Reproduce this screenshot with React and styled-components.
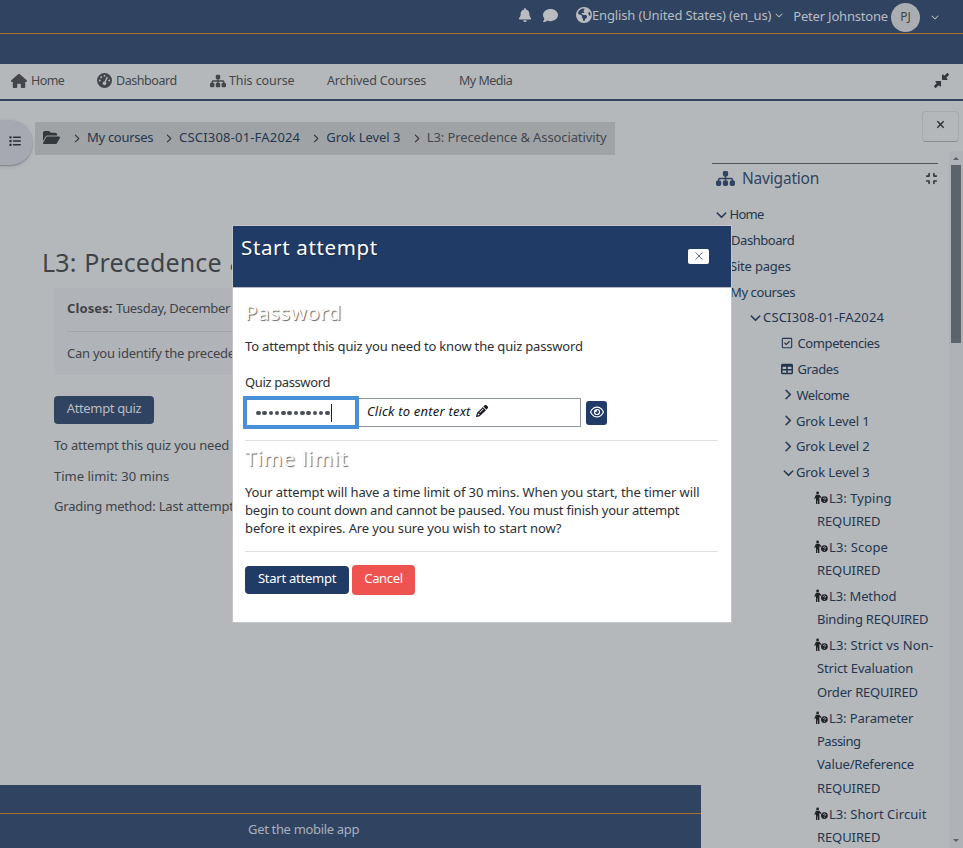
import React from "react";
import styled, { createGlobalStyle } from "styled-components";
import {
  FaBell, FaComment, FaEarthAmericas, FaChevronDown, FaChevronRight, FaHouse, FaGaugeHigh,
  FaSitemap, FaFolderOpen, FaCompress, FaRegSquareCheck, FaTable, FaPencil, FaRegEye,
  FaList, FaDownLeftAndUpRightToCenter,
} from "react-icons/fa6";

const Global = createGlobalStyle`
  * { box-sizing: border-box; }
  body { margin: 0; }
  button { font: inherit; letter-spacing: inherit; padding: 0; border: 0; }
  h1, h2, h3, p, ul { margin: 0; padding: 0; font-weight: 400; }
  svg { display: block; flex: none; }
`;

const Page = styled.div`
  position: relative;
  width: 963px;
  height: 848px;
  overflow: hidden;
  display: flex;
  flex-direction: column;
  background: #b4b8bb;
  color: #3f4347;
  font: 13px/18px "Noto Sans", "DejaVu Sans", sans-serif;
  white-space: nowrap;
`;
const Txt = styled.span`
  letter-spacing: ${(p) => p.$ls || 0}px;
`;

const TopBar = styled.header`
  height: 34px;
  flex: none;
  display: flex;
  align-items: center;
  padding-left: 518px;
  background: #304361;
  border-bottom: 1px solid #a9732f;
  color: #b9bdc1;
`;
const TopItem = styled.div`
  display: flex;
  align-items: center;
  margin-left: ${(p) => p.$gap || 0}px;
  height: 33px;
  padding-bottom: ${(p) => (p.$low ? 1 : 3)}px;
`;
const Avatar = styled.div`
  width: 29px;
  height: 29px;
  margin: 1px 11px 0 3px;
  border-radius: 50%;
  background: #aaadb1;
  color: #3f454c;
  font-size: 12px;
  line-height: 27px;
  text-align: center;
`;
const Band = styled.div`
  height: 30px;
  flex: none;
  background: #304361;
`;
const NavBar = styled.nav`
  height: 37px;
  flex: none;
  display: flex;
  align-items: center;
  padding: 0 14px 2px 11px;
  border-bottom: 2px solid #304361;
  color: #43474b;
  font-size: 12.5px;
`;
const NavItem = styled.a`
  display: flex;
  align-items: center;
  gap: ${(p) => p.$gap || 0}px;
  width: ${(p) => p.$w}px;
  span {
    padding-top: 1px;
  }
`;
const Shrink = styled.div`
  margin-left: auto;
  color: #35393f;
`;

const Body = styled.div`
  flex: 1;
  min-height: 0;
  display: flex;
`;
const Main = styled.main`
  width: 701px;
  display: flex;
  flex-direction: column;
`;
const CrumbRow = styled.div`
  display: flex;
  height: 65px;
  padding-top: 19px;
`;
const IndexToggle = styled.button`
  width: 33px;
  height: 46px;
  margin-right: 2px;
  padding: 0 0 3px 9px;
  border-radius: 0 23px 23px 0;
  background: #a6a9b1;
  border-bottom: 1px solid #85888c;
  box-shadow: 0 1px 3px rgba(0, 0, 0, 0.12);
  color: #2c3136;
`;
const Crumbs = styled.div`
  display: flex;
  align-items: center;
  width: 580px;
  height: 33px;
  margin-top: 2px;
  padding: 0 0 3px 8px;
  background: #a0a3a6;
  color: #24364f;
`;
const Sep = styled.span`
  display: flex;
  margin: 2px 6px 0 ${(p) => p.$l}px;
  color: #33383d;
`;
const Muted = styled.span`
  color: #43484f;
`;
const Title = styled.h1`
  margin: 79px 0 0 42px;
  font-size: 25px;
  line-height: 34px;
  letter-spacing: 0.12px;
  word-spacing: 1.2px;
`;
const Quiz = styled.section`
  padding: 9px 0 0 54px;
`;
const InfoBox = styled.div`
  width: 593px;
  height: 87px;
  padding: 11px 13px 0;
  background: #b0b3b8;
`;
const InfoLine = styled.div`
  height: ${(p) => p.$h}px;
  border-bottom: ${(p) => (p.$rule ? "1px solid #a1a4a8" : "0")};
`;
const Button = styled.button`
  display: inline-block;
  width: ${(p) => p.$w}px;
  height: ${(p) => p.$h || 28}px;
  border-radius: 4px;
  padding-bottom: 4px;
  background: ${(p) => p.$bg};
  color: ${(p) => p.$fg || "#fff"};
`;
const AttemptWrap = styled.div`
  display: flex;
  margin: 21px 0 12px;
  height: 28px;
`;
const Detail = styled.p`
  height: 30.5px;
`;
const Footer = styled.footer`
  margin-top: auto;
  height: 63px;
  padding-top: 28px;
  background: #304361;
`;
const FooterLine = styled.div`
  border-top: 1px solid #a9732f;
  padding: 6px 0 0 248px;
  height: 35px;
  color: #a9b1bd;
`;

const Drawer = styled.aside`
  width: 262px;
  display: flex;
  flex-direction: column;
`;
const CloseDrawer = styled.button`
  width: 37px;
  height: 31px;
  margin: 10px 4px 0 auto;
  display: flex;
  align-items: center;
  justify-content: center;
  padding-bottom: 4px;
  background: transparent;
  border: 1px solid #a5a8ac;
  border-bottom-color: #8a8d90;
  border-radius: 4px;
  color: #2a2e33;
`;
const DrawerBody = styled.div`
  flex: 1;
  margin-top: 9px;
  min-height: 0;
  display: flex;
`;
const Block = styled.div`
  width: 248px;
  padding: 12px 11px 0;
`;
const BlockHead = styled.div`
  display: flex;
  align-items: center;
  height: 30px;
  border-top: 1px solid #4e545c;
  padding: 0 0 1px 4px;
  color: #304361;
`;
const BlockName = styled.h2`
  font-size: 15.5px;
  margin-left: 7px;
  letter-spacing: -0.2px;
`;
const Tree = styled.div`
  padding-top: 8.4px;
  color: #24364f;
`;
const TreeRow = styled.div`
  display: flex;
  align-items: center;
  height: 25.8px;
  padding-left: ${(p) => p.$x}px;
`;
const TreeIcon = styled.span`
  width: ${(p) => p.$w}px;
  svg {
    stroke: currentColor;
    stroke-width: ${(p) => (p.$bold ? 12 : 0)}px;
  }
`;
const Activity = styled.div`
  padding: 1.4px 0 1px 105px;
  line-height: 23.4px;
`;
const ActLine = styled.div`
  display: flex;
  align-items: center;
  height: 23.4px;
  margin-left: ${(p) => (p.$first ? -3 : 0)}px;
`;
const ActIcon = styled.span`
  width: 15px;
  padding-bottom: 1px;
  color: #1f2327;
`;
const Scroll = styled.div`
  width: 14px;
  height: 697px;
  display: flex;
  flex-direction: column;
  align-items: center;
  background: #afb2b7;
`;
const Thumb = styled.div`
  width: 10px;
  height: 178px;
  margin: 5px 0 auto;
  background: #5d636a;
`;
const Arrow = styled.i`
  margin: ${(p) => (p.$down ? "0 0 6px" : "6px 0 0")};
  border: 3px solid transparent;
  ${(p) => (p.$down ? "border-bottom: 0; border-top" : "border-top: 0; border-bottom")}: 3px solid #5c6167;
`;

const Dialog = styled.div`
  position: absolute;
  left: 232px;
  top: 225px;
  width: 500px;
  height: 398px;
  background: #fff;
  border: 1px solid #c3c6c8;
  color: #2c3035;
`;
const DialogHead = styled.div`
  display: flex;
  justify-content: space-between;
  height: 62px;
  padding: 7px 22px 0 8px;
  background: #213b67;
  border-bottom: 1px solid #b6bac4;
`;
const DialogTitle = styled.h2`
  font-size: 20.5px;
  line-height: 28px;
  color: #fff;
  text-shadow: 1px 1px 1px rgba(0, 0, 0, 0.3);
  letter-spacing: 0.65px;
`;
const DialogClose = styled.button`
  display: flex;
  align-items: center;
  justify-content: center;
  width: 21px;
  height: 15px;
  margin-top: 16px;
  padding-bottom: 2px;
  border-radius: 2px;
  background: #fff;
  color: #65717e;
`;
const Form = styled.div`
  padding: 10px 13px 0 12px;
`;
const Legend = styled.h3`
  height: 28px;
  margin-top: ${(p) => p.$mt || 0}px;
  font-size: 20.5px;
  line-height: 28px;
  color: #fff;
  text-shadow: 1px 1px 1px rgba(0, 0, 0, 0.6);
  letter-spacing: ${(p) => p.$ls}px;
`;
const Copy = styled.p`
  margin-top: ${(p) => p.$mt}px;
`;
const Field = styled.div`
  display: flex;
  height: 50px;
  padding-top: 7px;
  border-bottom: 1px solid #dedfe3;
`;
const Masked = styled.div`
  display: flex;
  align-items: center;
  width: 112px;
  height: 29px;
  padding-left: 11px;
  background: #fff;
  outline: 4px solid #4a90d9;
  outline-offset: -2px;
  z-index: 1;
`;
const Dot = styled.i`
  width: 4.5px;
  height: 4.5px;
  margin: 1px 1.8px 0 0;
  border-radius: 50%;
  background: #4a4f57;
`;
const Caret = styled.i`
  width: 1px;
  height: 18px;
  margin-left: -1px;
  background: #222;
`;
const Hint = styled.div`
  display: flex;
  width: 224px;
  height: 29px;
  padding: 3px 0 0 9px;
  border: 1px solid #8f959e;
  font-style: italic;
  color: #0f1720;
`;
const Pencil = styled.span`
  margin: 3px 0 0 5px;
`;
const Reveal = styled.button`
  display: flex;
  align-items: center;
  justify-content: center;
  width: 21px;
  height: 24px;
  margin: 3px 0 0 5px;
  padding-bottom: 3px;
  border-radius: 3px;
  background: #213b67;
  color: #fff;
`;
const Rule = styled.div`
  margin-top: 14px;
  border-top: 1px solid #dedfe3;
`;
const Actions = styled.div`
  display: flex;
  align-items: center;
  gap: 3px;
  margin-top: 13px;
`;

const Cross = ({ size, weight }) => (
  <svg width={size} height={size} viewBox="0 0 10 10" fill="none" stroke="currentColor" strokeWidth={weight}>
    <path d="M1.5 1.5 8.5 8.5M8.5 1.5 1.5 8.5" />
  </svg>
);

const PersonQuestion = () => (
  <svg width="14" height="14" viewBox="0 0 14 14" fill="currentColor">
    <circle cx="3.6" cy="1.9" r="1.4" />
    <path d="M2 3.7h3.2L7.4 6l-.9 1-1.1-.9V13H4V9.4h-.6V13H2V6.5L1.2 8l-1-.6z" />
    <circle cx="10.4" cy="8.6" r="3.4" />
    <path d="M9.2 7.8c.1-1.4 2.4-1.3 2.4 0 0 .8-1.2.8-1.2 1.4M10.4 9.9v.9" fill="none" stroke="#b4b8bb" strokeWidth=".9" />
  </svg>
);

const down = <FaChevronDown size={11} />;
const right = <FaChevronRight size={11} />;
const tree = [
  [4, 13.5, down, "Home", -0.7],
  [4, 15, null, "Dashboard", -0.45],
  [4, 14, null, "Site pages", -0.2],
  [4, 14, null, "My courses", -0.4],
  [38, 13, down, "CSCI308-01-FA2024", 0.18],
  [69, 16.5, <FaRegSquareCheck size={12} />, "Competencies", -0.4],
  [69, 16.5, <FaTable size={12} />, "Grades", -0.4],
  [70, 14.5, right, "Welcome", -0.5],
  [70, 14, right, "Grok Level 1", -0.1],
  [70, 14, right, "Grok Level 2", -0.1],
  [71, 13, down, "Grok Level 3", -0.1],
];
const activities = [
  [["L3: Typing", 0.05], ["REQUIRED", -0.1]],
  [["L3: Scope", 0.15], ["REQUIRED", -0.1]],
  [["L3: Method", -0.15], ["Binding REQUIRED", -0.22]],
  [["L3: Strict vs Non-", 0.12], ["Strict Evaluation", -0.15], ["Order REQUIRED", -0.2]],
  [["L3: Parameter", -0.1], ["Passing", -0.5], ["Value/Reference", -0.18], ["REQUIRED", -0.1]],
  [["L3: Short Circuit", 0.05], ["REQUIRED", -0.1]],
];

export default function App() {
  return (
    <Page>
      <Global />
      <TopBar>
        <TopItem><FaBell size={14} /></TopItem>
        <TopItem $gap={11}><FaComment size={15} /></TopItem>
        <TopItem $gap={18}>
          <FaEarthAmericas size={16} />
          <Txt $ls={-0.14}>English (United States) (en_us)</Txt>
        </TopItem>
        <TopItem $gap={4}><FaChevronDown size={8} /></TopItem>
        <TopItem $gap={10} $low><Txt $ls={-0.2}>Peter Johnstone</Txt></TopItem>
        <Avatar>PJ</Avatar>
        <FaChevronDown size={8} />
      </TopBar>
      <Band />
      <NavBar>
        <NavItem $w={86} $gap={4}><FaHouse size={16} /><Txt $ls={-0.6}>Home</Txt></NavItem>
        <NavItem $w={113} $gap={4}><FaGaugeHigh size={15} /><Txt $ls={-0.45}>Dashboard</Txt></NavItem>
        <NavItem $w={117} $gap={3}><FaSitemap size={16} /><Txt $ls={-0.1}>This course</Txt></NavItem>
        <NavItem $w={132}><Txt $ls={-0.15}>Archived Courses</Txt></NavItem>
        <NavItem $w={70}><Txt $ls={-0.5}>My Media</Txt></NavItem>
        <Shrink><FaDownLeftAndUpRightToCenter size={15} /></Shrink>
      </NavBar>
      <Body>
        <Main>
          <CrumbRow>
            <IndexToggle><FaList size={12} /></IndexToggle>
            <Crumbs>
              <FaFolderOpen size={17} color="#33383d" />
              <Sep $l={12}><FaChevronRight size={9} /></Sep>
              <Txt $ls={-0.3}>My courses</Txt>
              <Sep $l={11}><FaChevronRight size={9} /></Sep>
              <Txt $ls={0.18}>CSCI308-01-FA2024</Txt>
              <Sep $l={11}><FaChevronRight size={9} /></Sep>
              <Txt $ls={-0.06}>Grok Level 3</Txt>
              <Sep $l={11.5}><FaChevronRight size={9} /></Sep>
              <Muted><Txt $ls={-0.11}>L3: Precedence &amp; Associativity</Txt></Muted>
            </Crumbs>
          </CrumbRow>
          <Title>L3: Precedence &amp;</Title>
          <Quiz>
            <InfoBox>
              <InfoLine $h={33} $rule><Txt $ls={0.1}><b>Closes:</b></Txt> <Txt $ls={-0.33}>Tuesday, December</Txt></InfoLine>
              <InfoLine $h={12} />
              <Txt $ls={-0.25}>Can you identify the precede</Txt>
            </InfoBox>
            <AttemptWrap><Button $w={100} $bg="#304361" $fg="#b9bdc1"><Txt $ls={-0.35}>Attempt quiz</Txt></Button></AttemptWrap>
            <Detail><Txt $ls={-0.2}>To attempt this quiz you need</Txt></Detail>
            <Detail><Txt>Time limit: 30 mins</Txt></Detail>
            <Detail><Txt $ls={-0.18}>Grading method: Last attempt</Txt></Detail>
          </Quiz>
          <Footer><FooterLine><Txt $ls={-0.33}>Get the mobile app</Txt></FooterLine></Footer>
        </Main>
        <Drawer>
          <CloseDrawer><Cross size={9} weight={1.5} /></CloseDrawer>
          <DrawerBody>
            <Block>
              <BlockHead>
                <FaSitemap size={19} />
                <BlockName>Navigation</BlockName>
                <Shrink><FaCompress size={13} /></Shrink>
              </BlockHead>
              <Tree>
                {tree.map(([x, w, icon, label, ls]) => (
                  <TreeRow key={label} $x={x}>
                    <TreeIcon $w={w} $bold={icon === down || icon === right}>{icon}</TreeIcon>
                    <Txt $ls={ls}>{label}</Txt>
                  </TreeRow>
                ))}
                {activities.map((lines) => (
                  <Activity key={lines[0][0]}>
                    {lines.map(([line, ls], i) => (
                      <ActLine key={line} $first={i === 0}>
                        {i === 0 && <ActIcon><PersonQuestion /></ActIcon>}
                        <Txt $ls={ls}>{line}</Txt>
                      </ActLine>
                    ))}
                  </Activity>
                ))}
              </Tree>
            </Block>
            <Scroll><Arrow /><Thumb /><Arrow $down /></Scroll>
          </DrawerBody>
        </Drawer>
      </Body>
      <Dialog>
        <DialogHead>
          <DialogTitle>Start attempt</DialogTitle>
          <DialogClose><Cross size={10} weight={1} /></DialogClose>
        </DialogHead>
        <Form>
          <Legend $ls={0.5}>Password</Legend>
          <Copy $mt={11}><Txt $ls={-0.18}>To attempt this quiz you need to know the quiz password</Txt></Copy>
          <Copy $mt={18}><Txt $ls={-0.38}>Quiz password</Txt></Copy>
          <Field>
            <Masked>{Array.from({ length: 12 }, (_, i) => <Dot key={i} />)}<Caret /></Masked>
            <Hint><Txt $ls={0.2}>Click to enter text</Txt><Pencil><FaPencil size={12} /></Pencil></Hint>
            <Reveal><FaRegEye size={14} /></Reveal>
          </Field>
          <Legend $ls={0.8} $mt={3}>Time limit</Legend>
          <Copy $mt={11}>
            <Txt $ls={-0.1}>Your attempt will have a time limit of 30 mins. When you start, the timer will</Txt><br />
            <Txt $ls={-0.22}>begin to count down and cannot be paused. You must finish your attempt</Txt><br />
            <Txt $ls={-0.11}>before it expires. Are you sure you wish to start now?</Txt>
          </Copy>
          <Rule />
          <Actions>
            <Button $w={104} $bg="#213b67"><Txt $ls={-0.25}>Start attempt</Txt></Button>
            <Button $w={63} $h={30} $bg="#ef5350"><Txt $ls={-0.35}>Cancel</Txt></Button>
          </Actions>
        </Form>
      </Dialog>
    </Page>
  );
}
